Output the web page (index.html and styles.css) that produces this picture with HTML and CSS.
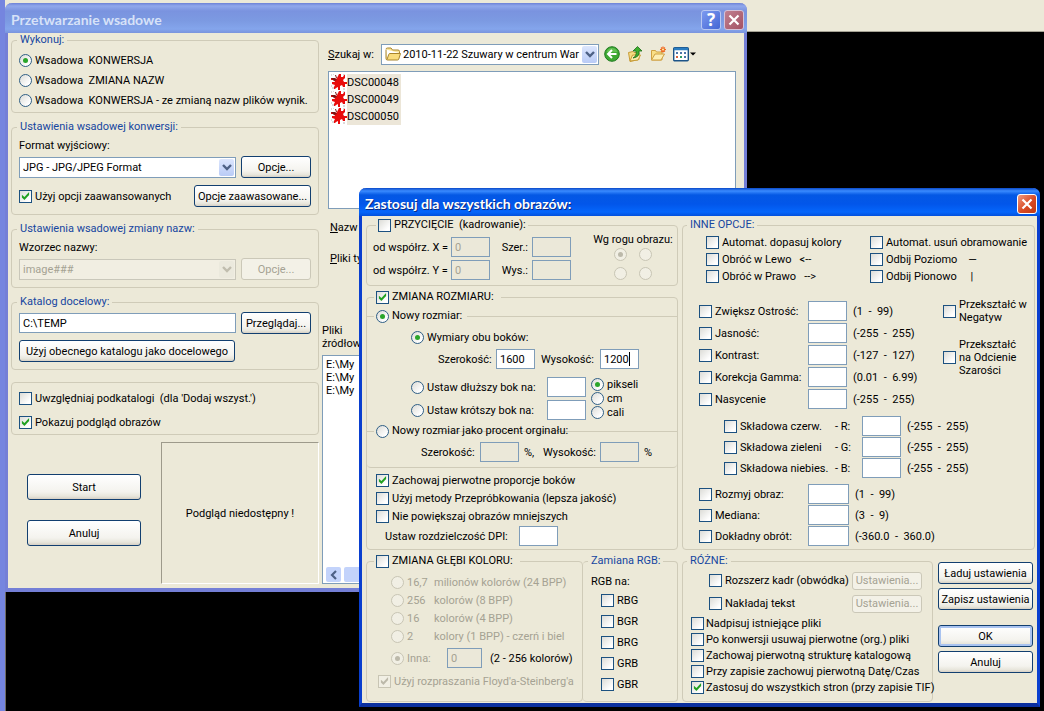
FILE: index.html
```html
<!DOCTYPE html>
<html lang="pl">
<head>
<meta charset="utf-8">
<title>Przetwarzanie wsadowe</title>
<link rel="stylesheet" href="styles.css">
</head>
<body>
<svg class="defs" aria-hidden="true">
  <symbol id="chevron" viewBox="0 0 10 8"><path d="M1 2l4 4 4-4" fill="none" stroke="currentColor" stroke-width="2.4"/></symbol>
  <symbol id="cross" viewBox="0 0 12 12"><path d="M1.500 1.500l9 9M10.500 1.500l-9 9" fill="none" stroke="#fff" stroke-width="2.200"/></symbol>
  <symbol id="splat" viewBox="0 0 16 16">
    <path d="M8 0h2v3h2l1-2h1v3l-2 2 1 2h3v2h-2v3h-2l-1-2-2 1v4H7v-3l-2 1-1 1H3v-2l1-2-3-1V8h3L3 6H0V4h4l1 1 1-1z" fill="#e80c0c"/>
    <path d="M0 4h4l2 2-3 1zM4 1h1l1 3H5z" fill="#7a1414"/>
    <path d="M0 1h1M2 0h1M12 0h2M0 12h1M1 14h2M12 15h2" stroke="#b9b4b4"/>
  </symbol>
</svg>
<div class="desktop">
  <div class="app-toolbar"></div>
  <div class="app-view"></div>

  <section class="window main-window" aria-labelledby="main-title">
    <header class="titlebar">
      <h1 id="main-title">Przetwarzanie wsadowe</h1>
      <button class="tb-button help" aria-label="Pomoc">?</button>
      <button class="tb-button close" aria-label="Zamknij"><svg><use href="#cross"/></svg></button>
    </header>
    <div class="main-body">
      <div class="settings">
        <fieldset class="modes">
          <legend>Wykonuj:</legend>
          <label class="opt"><input type="radio" name="mode" checked><span>Wsadowa  KONWERSJA</span></label>
          <label class="opt"><input type="radio" name="mode"><span>Wsadowa  ZMIANA NAZW</span></label>
          <label class="opt"><input type="radio" name="mode"><span>Wsadowa  KONWERSJA - ze zmianą nazw plików wynik.</span></label>
        </fieldset>

        <fieldset class="form">
          <legend>Ustawienia wsadowej konwersji:</legend>
          <label class="caption" for="format">Format wyjściowy:</label>
          <div class="row">
            <span class="combo"><select id="format"><option>JPG - JPG/JPEG Format</option></select><i><svg><use href="#chevron"/></svg></i></span>
            <button class="btn side">Opcje...</button>
          </div>
          <div class="row gap-top">
            <label class="opt grow"><input type="checkbox" checked><span>Użyj opcji zaawansowanych</span></label>
            <button class="btn advanced">Opcje zaawasowane...</button>
          </div>
        </fieldset>

        <fieldset class="form">
          <legend>Ustawienia wsadowej zmiany nazw:</legend>
          <label class="caption" for="pattern">Wzorzec nazwy:</label>
          <div class="row">
            <span class="combo off"><select id="pattern" disabled><option>image###</option></select><i><svg><use href="#chevron"/></svg></i></span>
            <button class="btn side" disabled>Opcje...</button>
          </div>
        </fieldset>

        <fieldset class="form target">
          <legend>Katalog docelowy:</legend>
          <div class="row">
            <input class="field grow" type="text" value="C:\TEMP" aria-label="Katalog docelowy">
            <button class="btn side">Przeglądaj...</button>
          </div>
          <button class="btn use-current">Użyj obecnego katalogu jako docelowego</button>
        </fieldset>

        <fieldset class="flags">
          <label class="opt"><input type="checkbox"><span>Uwzględniaj podkatalogi  (dla 'Dodaj wszyst.')</span></label>
          <label class="opt"><input type="checkbox" checked><span>Pokazuj podgląd obrazów</span></label>
        </fieldset>

        <div class="run">
          <div class="run-buttons">
            <button class="btn">Start</button>
            <button class="btn">Anuluj</button>
          </div>
          <div class="preview">Podgląd niedostępny !</div>
        </div>
      </div>

      <div class="browser">
        <div class="lookin">
          <label for="folder"><u>S</u>zukaj w:</label>
          <span class="combo folder">
            <svg class="folder-icon" viewBox="0 0 16 14"><path d="M1 2.500Q1 1 2.500 1H6l1.500 2H13q1.500 0 1.500 1.500V6" fill="#fbe69a" stroke="#a8842c"/><path d="M1 3v8.500Q1 13 2.500 13h10q1 0 1.300-1L15.500 6.500H5Q4 6.500 3.700 7.500L2 12.500" fill="#f9dc7c" stroke="#a8842c"/></svg>
            <select id="folder"><option>2010-11-22 Szuwary w centrum War</option></select><i><svg><use href="#chevron"/></svg></i>
          </span>
          <span class="tools">
            <button aria-label="Wstecz"><svg viewBox="0 0 16 16"><circle cx="8" cy="8" r="7.300" fill="#3da832" stroke="#1f7a20"/><path d="M2.500 6Q4 2 8 2t5.500 4" fill="#7bd067" opacity=".6"/><path d="M12.500 8H4.500M8 4L4 8l4 4" fill="none" stroke="#fff" stroke-width="2"/></svg></button>
            <button aria-label="W górę"><svg viewBox="0 0 16 16"><path d="M1.500 6.500L6 5.500l1 1h5v7l-9 2z" fill="#f7dd84" stroke="#c79c38"/><path d="M3 15l2.500-6h8L11 14z" fill="#fcebac" stroke="#c79c38"/><path d="M6 12q4-2 3-7H6l4.500-4.500L15 5h-3q1 6-6 7z" fill="#3fae2e" stroke="#1d6d1b" stroke-width=".8"/></svg></button>
            <button aria-label="Nowy folder"><svg viewBox="0 0 16 16"><path d="M1.500 14V4.500h4l1 1.500H12v8z" fill="#f9df86" stroke="#cfa040"/><path d="M1.500 14L5 8h9.500L11 14z" fill="#fdeeb4" stroke="#cfa040"/><path d="M13 .5v6M10 3.500h6M11 1.500l4 4M15 1.500l-4 4" stroke="#ee6a24" stroke-width="1.200"/><circle cx="13" cy="3.500" r="1" fill="#fff2a0"/></svg></button>
            <button class="views" aria-label="Widok"><svg viewBox="0 0 23 16"><rect x=".7" y="1.700" width="14.600" height="13" rx="1" fill="#fff" stroke="#1c5488" stroke-width="1.400"/><path d="M1 3h14" stroke="#2a7cc0" stroke-width="2.500"/><path d="M3 7h2M7 7h2M11 7h2" stroke="#4c74a8" stroke-width="2"/><path d="M3 11h2" stroke="#d8603c" stroke-width="2"/><path d="M7 11h2" stroke="#2c9c66" stroke-width="2"/><path d="M11 11h2" stroke="#4c74a8" stroke-width="2"/><path d="M17 6.500h6l-3 3z" fill="#000"/></svg></button>
          </span>
        </div>
        <ul class="files">
          <li><svg><use href="#splat"/></svg><span>DSC00048</span></li>
          <li><svg><use href="#splat"/></svg><span>DSC00049</span></li>
          <li><svg><use href="#splat"/></svg><span>DSC00050</span></li>
        </ul>
        <div class="names">
          <span><u>N</u>azw</span>
          <span><u>P</u>liki ty</span>
        </div>
        <div class="source">
          <div class="source-label">Pliki<br>źródłow</div>
          <div class="source-list">
            <ul><li>E:\My</li><li>E:\My</li><li>E:\My</li></ul>
            <div class="scrollbar"><button aria-label="Przewiń w lewo"><svg viewBox="0 0 8 10"><path d="M6 1L2 5l4 4" fill="none" stroke="#4d6185" stroke-width="2.200"/></svg></button><span></span></div>
          </div>
        </div>
      </div>
    </div>
  </section>

  <section class="window dialog" role="dialog" aria-labelledby="dialog-title">
    <header class="titlebar">
      <h2 id="dialog-title">Zastosuj dla wszystkich obrazów:</h2>
      <button class="tb-button close" aria-label="Zamknij"><svg><use href="#cross"/></svg></button>
    </header>
    <div class="dialog-body">
      <div class="col">
        <fieldset class="crop">
          <legend class="wide"><label class="opt"><input type="checkbox"><span>PRZYCIĘCIE  (kadrowanie):</span></label></legend>
          <div class="crop-fields">
            <label for="cx">od współrz. X =</label><input class="field" id="cx" value="0" disabled>
            <label for="cw">Szer.:</label><input class="field" id="cw" disabled>
            <label for="cy">od współrz. Y =</label><input class="field" id="cy" value="0" disabled>
            <label for="ch">Wys.:</label><input class="field" id="ch" disabled>
          </div>
          <div class="corner">
            <span>Wg rogu obrazu:</span>
            <div class="corner-grid">
              <input type="radio" name="corner" checked disabled aria-label="lewy górny">
              <input type="radio" name="corner" disabled aria-label="prawy górny">
              <input type="radio" name="corner" disabled aria-label="lewy dolny">
              <input type="radio" name="corner" disabled aria-label="prawy dolny">
            </div>
          </div>
        </fieldset>

        <fieldset class="resize">
          <legend class="wide"><label class="opt"><input type="checkbox" checked><span>ZMIANA ROZMIARU:  </span></label></legend>
          <fieldset class="inner size">
            <legend class="wide"><label class="opt"><input type="radio" name="size" checked><span>Nowy rozmiar: </span></label></legend>
            <label class="opt both"><input type="radio" name="side" checked><span>Wymiary obu boków:</span></label>
            <div class="row dims">
              <label for="w">Szerokość:</label><input class="field" id="w" value="1600">
              <label for="h">Wysokość:</label><span class="active-field"><input class="field" id="h" value="1200"><b class="caret"></b></span>
            </div>
            <div class="sides">
              <div class="side-rows">
                <div class="row"><label class="opt grow"><input type="radio" name="side"><span>Ustaw dłuższy bok na:</span></label><input class="field" aria-label="Dłuższy bok"></div>
                <div class="row"><label class="opt grow"><input type="radio" name="side"><span>Ustaw krótszy bok na:</span></label><input class="field" aria-label="Krótszy bok"></div>
              </div>
              <div class="units">
                <label class="opt"><input type="radio" name="unit" checked><span>pikseli</span></label>
                <label class="opt"><input type="radio" name="unit"><span>cm</span></label>
                <label class="opt"><input type="radio" name="unit"><span>cali</span></label>
              </div>
            </div>
          </fieldset>
          <fieldset class="inner percent">
            <legend class="wide"><label class="opt"><input type="radio" name="size"><span>Nowy rozmiar jako procent orginału:  </span></label></legend>
            <div class="row">
              <label for="pw">Szerokość:</label><input class="field" id="pw" disabled><span class="pct">%,</span>
              <label for="ph">Wysokość:</label><input class="field" id="ph" disabled><span class="pct">%</span>
            </div>
          </fieldset>
          <div class="resize-flags">
            <label class="opt"><input type="checkbox" checked><span>Zachowaj pierwotne proporcje boków</span></label>
            <label class="opt"><input type="checkbox"><span>Użyj metody Przepróbkowania (lepsza jakość)</span></label>
            <label class="opt"><input type="checkbox"><span>Nie powiększaj obrazów mniejszych</span></label>
            <div class="row dpi"><label for="dpi">Ustaw rozdzielczość DPI:</label><input class="field" id="dpi"></div>
          </div>
        </fieldset>

        <div class="colors">
          <fieldset class="depth">
            <legend class="wide"><label class="opt"><input type="checkbox"><span>ZMIANA GŁĘBI KOLORU:  </span></label></legend>
            <label class="opt off"><input type="radio" name="bpp" disabled><span>16,7</span><span>milionów kolorów (24 BPP)</span></label>
            <label class="opt off"><input type="radio" name="bpp" disabled><span>256</span><span>kolorów (8 BPP)</span></label>
            <label class="opt off"><input type="radio" name="bpp" disabled><span>16</span><span>kolorów (4 BPP)</span></label>
            <label class="opt off"><input type="radio" name="bpp" disabled><span>2</span><span>kolory (1 BPP) - czerń i biel</span></label>
            <div class="row other"><label class="opt off"><input type="radio" name="bpp" checked disabled><span>Inna:</span></label><input class="field" value="0" disabled aria-label="Liczba kolorów"><span>(2 - 256 kolorów)</span></div>
            <label class="opt off dither"><input type="checkbox" checked disabled><span>Użyj rozpraszania Floyd'a-Steinberg'a</span></label>
          </fieldset>
          <fieldset class="rgb">
            <legend>Zamiana RGB:</legend>
            <span class="rgb-caption">RGB na:</span>
            <label class="opt"><input type="checkbox"><span>RBG</span></label>
            <label class="opt"><input type="checkbox"><span>BGR</span></label>
            <label class="opt"><input type="checkbox"><span>BRG</span></label>
            <label class="opt"><input type="checkbox"><span>GRB</span></label>
            <label class="opt"><input type="checkbox"><span>GBR</span></label>
          </fieldset>
        </div>
      </div>

      <div class="col">
        <fieldset class="other-options">
          <legend>INNE OPCJE:</legend>
          <div class="transforms">
            <label class="opt"><input type="checkbox"><span>Automat. dopasuj kolory</span></label>
            <label class="opt"><input type="checkbox"><span>Automat. usuń obramowanie</span></label>
            <label class="opt"><input type="checkbox"><span>Obróć w Lewo   &lt;--</span></label>
            <label class="opt"><input type="checkbox"><span>Odbij Poziomo    —</span></label>
            <label class="opt"><input type="checkbox"><span>Obróć w Prawo   --&gt;</span></label>
            <label class="opt"><input type="checkbox"><span>Odbij Pionowo     |</span></label>
          </div>
          <div class="adjust">
            <div class="levels">
              <label class="opt"><input type="checkbox"><span>Zwiększ Ostrość:</span></label><input class="field" aria-label="Ostrość"><span>(1  -  99)</span>
              <label class="opt"><input type="checkbox"><span>Jasność:</span></label><input class="field" aria-label="Jasność"><span>(-255  -  255)</span>
              <label class="opt"><input type="checkbox"><span>Kontrast:</span></label><input class="field" aria-label="Kontrast"><span>(-127  -  127)</span>
              <label class="opt"><input type="checkbox"><span>Korekcja Gamma:</span></label><input class="field" aria-label="Gamma"><span>(0.01  -  6.99)</span>
              <label class="opt"><input type="checkbox"><span>Nasycenie</span></label><input class="field" aria-label="Nasycenie"><span>(-255  -  255)</span>
            </div>
            <div class="convert">
              <label class="opt"><input type="checkbox"><span>Przekształć w<br>Negatyw</span></label>
              <label class="opt"><input type="checkbox"><span>Przekształć<br>na Odcienie<br>Szarości</span></label>
            </div>
          </div>
          <div class="channels">
            <label class="opt"><input type="checkbox"><span>Składowa czerw.</span><span>- R:</span></label><input class="field" aria-label="R"><span>(-255  -  255)</span>
            <label class="opt"><input type="checkbox"><span>Składowa zieleni</span><span>- G:</span></label><input class="field" aria-label="G"><span>(-255  -  255)</span>
            <label class="opt"><input type="checkbox"><span>Składowa niebies.</span><span>- B:</span></label><input class="field" aria-label="B"><span>(-255  -  255)</span>
          </div>
          <div class="levels filters">
            <label class="opt"><input type="checkbox"><span>Rozmyj obraz:</span></label><input class="field" aria-label="Rozmycie"><span>(1  -  99)</span>
            <label class="opt"><input type="checkbox"><span>Mediana:</span></label><input class="field" aria-label="Mediana"><span>(3  -  9)</span>
            <label class="opt"><input type="checkbox"><span>Dokładny obrót:</span></label><input class="field" aria-label="Obrót"><span>(-360.0  -  360.0)</span>
          </div>
        </fieldset>

        <div class="bottom">
          <fieldset class="misc">
            <legend>RÓŻNE:</legend>
            <div class="row"><label class="opt grow"><input type="checkbox"><span>Rozszerz kadr (obwódka)</span></label><button class="btn" disabled>Ustawienia...</button></div>
            <div class="row"><label class="opt grow"><input type="checkbox"><span>Nakładaj tekst</span></label><button class="btn" disabled>Ustawienia...</button></div>
            <label class="opt"><input type="checkbox"><span>Nadpisuj istniejące pliki</span></label>
            <label class="opt"><input type="checkbox"><span>Po konwersji usuwaj pierwotne (org.) pliki</span></label>
            <label class="opt"><input type="checkbox"><span>Zachowaj pierwotną strukturę katalogową</span></label>
            <label class="opt"><input type="checkbox"><span>Przy zapisie zachowuj pierwotną Datę/Czas</span></label>
            <label class="opt"><input type="checkbox" checked><span>Zastosuj do wszystkich stron (przy zapisie TIF)</span></label>
          </fieldset>
          <div class="actions">
            <button class="btn">Ładuj ustawienia</button>
            <button class="btn">Zapisz ustawienia</button>
            <button class="btn default">OK</button>
            <button class="btn">Anuluj</button>
          </div>
        </div>
      </div>
    </div>
  </section>
</div>
</body>
</html>
```

FILE: styles.css
```css
* { box-sizing: border-box; }
body {
  margin: 0;
  font: 11px/13px Roboto, "Liberation Sans", sans-serif;
  color: #000;
  white-space: nowrap;
}
button, input, select { font: inherit; color: inherit; margin: 0; }
ul { margin: 0; padding: 0; list-style: none; }
.defs { display: none; }

.desktop {
  position: relative;
  min-height: 100vh;
  display: flex;
  flex-direction: column;
  overflow: hidden;
  background: #000;
  border-left: 5px solid #7585df;
}
.app-toolbar { height: 32px; background: #ece9d8; border-bottom: 1px solid #a5a294; }
.app-view { flex: 1; background: #000; border-left: 1px solid #6e6a60; }

/* windows */
.window { position: absolute; background: #ece9d8; border-radius: 7px 7px 0 0; }
.main-window { left: 0; right: 297px; top: 3px; border: solid #747fd6; border-width: 0 3px 4px; }
.dialog { left: 354px; right: 4px; top: 188px; border: solid #0a3fcf; border-width: 0 3px 4px; border-bottom-color: #0a2f9e; }
.titlebar { display: flex; align-items: center; gap: 3px; padding: 3px 3px 0; margin: 0 -3px; border-radius: 7px 7px 0 0; }
.titlebar h1, .titlebar h2 { flex: 1; margin: 0; padding-left: 3px; font: bold 14px/18px Lato, sans-serif; }
.main-window .titlebar { height: 30px; background: linear-gradient(#6d82d6, #91a8ec 3px, #7a93df 8px, #7c9ae2 18px, #84a5ec 26px, #7a94dd); }
.main-window h1 { color: #d7e2f8; }
.dialog .titlebar { height: 28px; background: linear-gradient(#0a49c8, #3a8bff 3px, #0458e4 7px, #0256ea 16px, #0566fb 24px, #0350dc); }
.dialog h2 { color: #fff; text-shadow: 1px 1px #0a2a80; }
.tb-button { width: 20px; height: 20px; padding: 0; display: grid; place-items: center; border: 1px solid #fff; border-radius: 3px; color: #fff; font: bold 17px/18px "Noto Sans", sans-serif; }
.tb-button svg { width: 12px; height: 12px; }
.tb-button.help { background: linear-gradient(135deg, #7c9af0, #4466d4); border-color: #b9c8f2; }
.main-window .close { background: linear-gradient(135deg, #c08090, #a45264); border-color: #d4c2d8; }
.dialog .close { background: linear-gradient(135deg, #f09a80, #d84a24 55%, #c03a14); }

/* shared controls */
fieldset { min-width: 0; margin: 0; padding: 0 7px; border: 1px solid #cfcbb8; border-radius: 4px; }
legend { height: 14px; line-height: 14px; margin-left: -2px; padding: 0 3px; color: #1646a0; }
legend.wide { color: #000; margin-left: 0; padding: 0 2px; }
.row { display: flex; align-items: center; }
.grow { flex: 1; min-width: 0; }
.opt { display: flex; align-items: center; gap: 3px; }
.opt span { white-space: pre; }
.opt.off { color: #a5a293; }
input[type="checkbox"], input[type="radio"] {
  appearance: none;
  flex: none;
  display: grid;
  place-items: center;
  width: 13px;
  height: 13px;
  border: 1px solid #1c5180;
  background: linear-gradient(135deg, #dcdcd7, #fff 80%);
}
input[type="radio"] { border-radius: 50%; border-color: #2f5f86; }
input[type="checkbox"]:checked::after { content: ""; width: 9px; height: 9px; background: #21a121; clip-path: polygon(10% 35%, 38% 60%, 90% 5%, 90% 40%, 38% 95%, 10% 68%); }
input[type="radio"]:checked::after { content: ""; width: 5px; height: 5px; border-radius: 50%; background: #2aa52a; }
input[type="checkbox"]:disabled, input[type="radio"]:disabled { border-color: #c8c5b4; background: #f1efe4; }
input:disabled::after { background: #bcb9aa !important; }
.field { width: 39px; height: 20px; padding: 0 3px; border: 1px solid #7f9db9; border-radius: 0; background: #fff; }
.field:disabled { background: #ebe8d9; color: #a5a293; }
.field.grow { width: auto; }
.combo { flex: 1; min-width: 0; height: 21px; display: flex; align-items: stretch; padding: 1px; border: 1px solid #7f9db9; background: #fff; }
.combo select { flex: 1; min-width: 0; appearance: none; border: 0; padding: 0 2px; background: transparent; }
.combo i { width: 15px; display: grid; place-items: center; background: linear-gradient(#dce6fd, #b9cbf6); border-radius: 2px; color: #4d6185; }
.combo i svg { width: 10px; height: 8px; }
.combo.off { background: #f1eee2; border-color: #c9c7ba; }
.combo.off select { color: #a5a293; opacity: 1; }
.combo.off i { background: #ebe9dd; color: #c0bdae; }
.btn {
  height: 22px;
  padding: 0;
  border: 1px solid #123f70;
  border-radius: 3px;
  background: linear-gradient(#fff, #f4f3ee 70%, #e8e6dc 88%, #d6d0c5);
  text-align: center;
}
.btn:disabled { border-color: #cbc8b8; background: #f3f1e7; color: #a5a293; }
.btn.default { box-shadow: inset 0 0 0 2px #a9c3f0; }

/* main window */
.main-body { display: grid; grid-template-columns: 308px 1fr; gap: 3px; padding: 0 0 4px 3px; }
.settings { display: flex; flex-direction: column; gap: 7px; }
.modes { padding-top: 3px; padding-bottom: 2px; }
.modes .opt { height: 20px; }
.form { padding-top: 5px; padding-bottom: 7px; }
.caption { display: block; height: 17px; }
.form .row { gap: 5px; height: 22px; }
.form .gap-top { margin-top: 7px; }
.side { width: 70px; }
.advanced { width: 117px; }
.target { padding-top: 3px; }
.use-current { width: 216px; margin-top: 6px; }
.flags { margin-top: 5px; padding-top: 3px; }
.flags .opt { height: 24px; }
.run { display: grid; grid-template-columns: 1fr 158px; height: 142px; }
.run-buttons { display: flex; flex-direction: column; gap: 20px; padding: 32px 20px 0 16px; }
.run-buttons .btn { height: 26px; }
.preview { display: grid; place-items: center; border: 1px solid; border-color: #9d9a8b #fff #fff #9d9a8b; }

.browser { display: flex; flex-direction: column; min-width: 0; padding-right: 8px; }
.lookin { display: flex; align-items: center; height: 22px; margin: 10px 0 6px 6px; }
.lookin label { width: 53px; }
.combo.folder { flex: 0 0 218px; padding-left: 3px; align-items: center; }
.combo.folder select { padding: 0; }
.combo.folder i { height: 17px; }
.folder-icon { width: 16px; height: 14px; margin-right: 2px; }
.tools { display: flex; gap: 7px; padding-left: 5px; }
.tools button { padding: 0; border: 0; background: none; width: 16px; height: 16px; }
.tools .views { width: 23px; }
.tools svg { display: block; width: 100%; height: 16px; }
.files { height: 138px; margin-left: 6px; padding: 2px; border: 1px solid #7f9db9; background: #fff; }
.files li { display: flex; height: 17px; line-height: 17px; }
.files svg { width: 16px; height: 16px; }
.files span { background: #ece6d8; padding-right: 2px; }
.names { display: grid; grid-template-rows: 31px 31px; align-items: center; padding-left: 8px; margin-top: 3px; }
.source { margin-top: 50px; flex: 1; display: flex; flex-direction: column; }
.source-label { height: 31px; }
.source-list { flex: 1; display: flex; flex-direction: column; justify-content: space-between; padding: 2px 3px 1px; border: 1px solid #7f9db9; background: #fff; }
.scrollbar { display: flex; gap: 3px; height: 15px; }
.scrollbar button { width: 15px; padding: 0; display: grid; place-items: center; border: 0; border-radius: 2px; background: #c3d3fb; }
.scrollbar svg { width: 8px; height: 10px; }
.scrollbar span { flex: 1; border-radius: 2px; background: #c3d3fb; }

/* dialog */
.dialog-body { display: grid; grid-template-columns: 312px 1fr; gap: 4px; padding: 2px 2px 1px 4px; }
.col { display: flex; flex-direction: column; gap: 4px; min-width: 0; }
.crop { display: flex; justify-content: space-between; padding: 5px 4px 5px 6px; }
.crop legend { margin-left: 3px; }
.crop-fields { display: grid; grid-template-columns: 78px 39px 42px 39px; grid-auto-rows: 20px; row-gap: 3px; align-items: center; }
.crop-fields label:nth-of-type(even) { padding-right: 4px; text-align: right; }
.corner { display: flex; flex-direction: column; align-items: center; width: 80px; gap: 2px; margin-top: -4px; }
.corner-grid { display: grid; grid-template-columns: 13px 13px; gap: 6px 12px; }
.resize { padding: 0; }
.resize > legend { margin-left: 7px; }
.inner { border-width: 1px 0 0; border-radius: 0; padding: 0; }
.size { margin-top: 5px; padding: 6px 0 4px 44px; }
.size > legend { margin-left: -37px; }
.both { height: 16px; margin-bottom: 4px; }
.dims { padding-left: 27px; }
.dims label:first-child { width: 58px; }
.dims label:nth-of-type(2) { width: 65px; padding-left: 6px; }
.active-field { display: grid; align-items: center; }
.active-field > * { grid-area: 1 / 1; }
.caret { width: 1px; height: 14px; margin-left: 29px; background: #000; }
.sides { display: flex; gap: 5px; padding-top: 8px; }
.side-rows { display: grid; grid-auto-rows: 20px; gap: 3px; width: 175px; }
.units { display: grid; grid-auto-rows: 14px; }
.percent { border-bottom-width: 1px; border-radius: 0 0 4px 4px; padding: 4px 0 5px 54px; }
.percent > legend { margin-left: -47px; }
.percent label:first-child { width: 59px; }
.percent .pct { width: 24px; padding-left: 5px; }
.percent .row label:nth-of-type(2) { width: 57px; }
.resize-flags { padding: 3px 9px; }
.resize-flags .opt { height: 18px; }
.dpi { padding: 1px 0 0 9px; }
.dpi label { width: 134px; }
.colors { display: grid; grid-template-columns: 217px 1fr; flex: 1; }
.depth { padding: 5px 7px 11px; }
.depth > legend { margin-left: 0; }
.depth > .opt { height: 18px; padding-left: 17px; }
.depth > .opt span:nth-of-type(1) { min-width: 24px; }
.other { height: 20px; margin-top: 3px; padding-left: 17px; gap: 8px; }
.other .opt { width: 48px; }
.other .field { width: 35px; }
.depth > .dither { margin-top: 4px; padding-left: 4px; }
.rgb { border-left: 0; padding-top: 5px; }
.rgb-caption { display: block; height: 17px; padding-left: 1px; line-height: 17px; }
.rgb .opt { height: 21px; padding-left: 11px; }

.other-options { padding: 1px 5px 3px 16px; }
.other-options > legend { margin-left: -12px; }
.transforms { display: grid; grid-template-columns: 164px 1fr; grid-template-rows: 18px 17px 16px; padding-left: 7px; }
.adjust { display: flex; justify-content: space-between; padding-top: 17px; }
.levels { display: grid; grid-template-columns: 109px 39px 84px; grid-auto-rows: 20px; row-gap: 2px; align-items: center; }
.levels > span, .channels > span { padding-left: 6px; white-space: pre; }
.convert { width: 86px; display: flex; flex-direction: column; gap: 14px; margin-top: -3px; }
.channels { display: grid; grid-template-columns: 138px 39px 1fr; grid-auto-rows: 20px; row-gap: 1px; align-items: center; padding: 7px 0 6px 25px; }
.channels .opt span:nth-of-type(1) { width: 92px; }
.levels.filters { grid-template-columns: 109px 41px 1fr; row-gap: 1px; }
.filters .field { width: 41px; }
.bottom { display: grid; grid-template-columns: 1fr 95px; gap: 5px; padding-right: 2px; flex: 1; }
.misc { padding: 1px 2px 6px 8px; }
.misc > legend { margin-left: -4px; }
.misc .row { height: 23px; padding: 0 8px 0 18px; }
.misc .btn { width: 70px; height: 18px; line-height: 16px; }
.misc > .opt { height: 16px; gap: 2px; }
.actions { display: flex; flex-direction: column; gap: 4px; padding-top: 8px; }
.actions .default { margin-top: 11px; }
```
